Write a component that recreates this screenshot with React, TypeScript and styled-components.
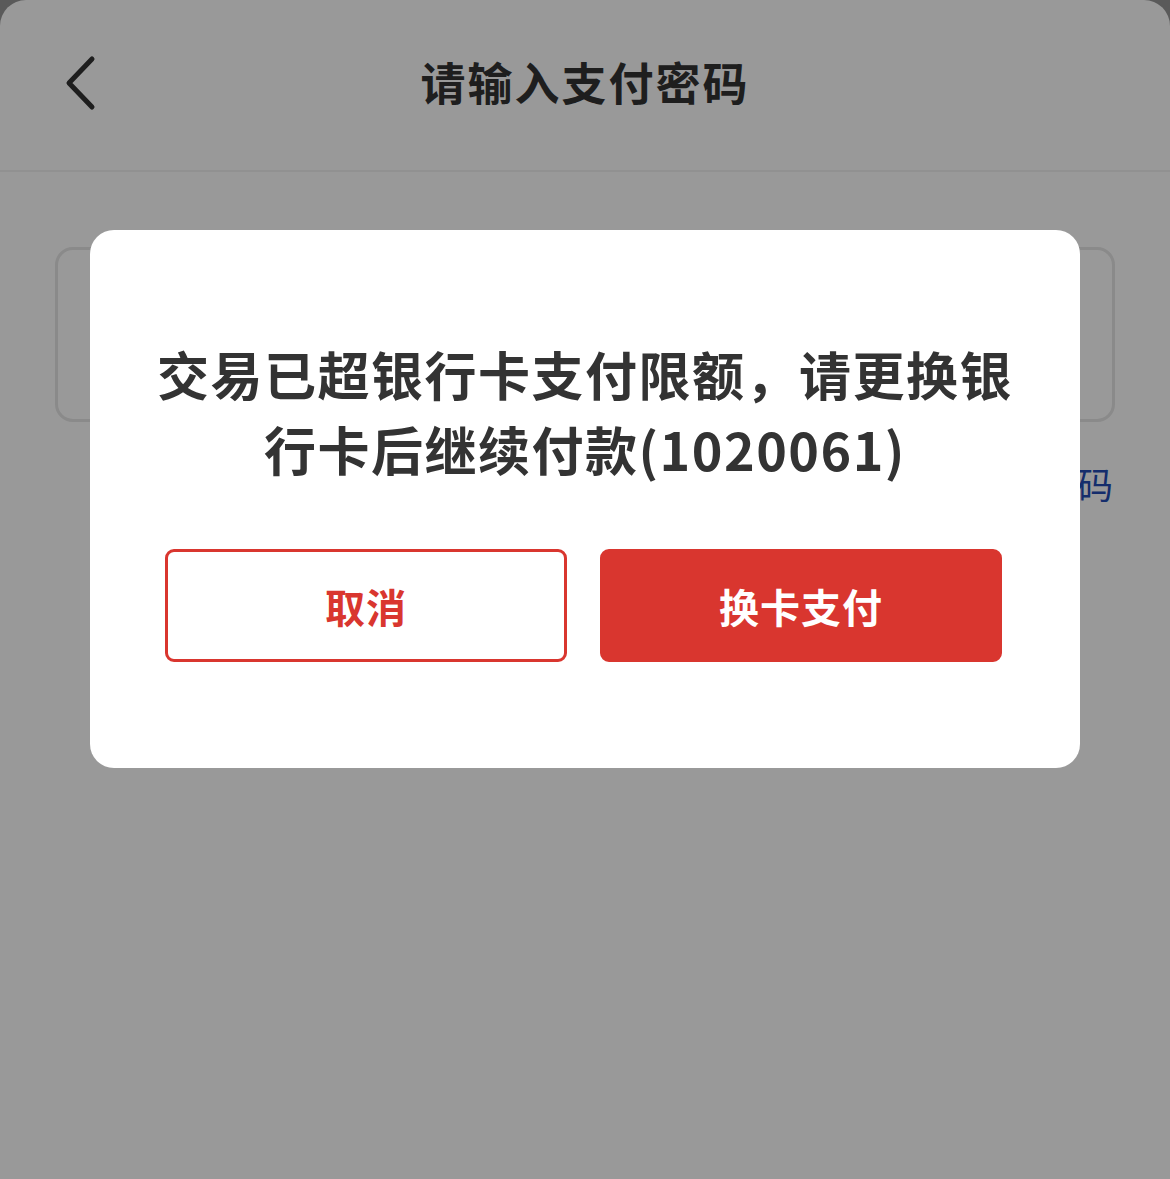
import React from 'react';
import styled, { createGlobalStyle } from 'styled-components';

const GlobalStyle = createGlobalStyle`
  html, body {
    margin: 0;
    padding: 0;
    background: #969696;
  }
  * {
    box-sizing: border-box;
  }
  #root {
    font-family: "Noto Sans CJK SC", "Noto Sans", sans-serif;
  }
`;

function BackIcon() {
  return (
    <svg width="40" height="60" viewBox="0 0 40 60" fill="none">
      <path
        d="M30 6 L7 30 L30 54"
        stroke="#333"
        strokeWidth="5"
        strokeLinecap="round"
        strokeLinejoin="round"
      />
    </svg>
  );
}

function App() {
  return (
    <>
      <GlobalStyle />
      <Page>
        <Header>
          <BackButton>
            <BackIcon />
          </BackButton>
          <Title>请输入支付密码</Title>
        </Header>
        <Body>
          <PasswordBox />
          <ForgotRow>
            <ForgotLink>忘记密码</ForgotLink>
          </ForgotRow>
        </Body>
      </Page>
      <Overlay>
        <Dialog>
          <Message>交易已超银行卡支付限额，请更换银行卡后继续付款(1020061)</Message>
          <ButtonRow>
            <DialogButton>取消</DialogButton>
            <DialogButton primary>换卡支付</DialogButton>
          </ButtonRow>
        </Dialog>
      </Overlay>
    </>
  );
}

const Page = styled.div`
  width: 100%;
  height: 1179px;
  background: #fff;
  border-radius: 26px 26px 0 0;
  overflow: hidden;
`;
const Header = styled.div`
  position: relative;
  height: 172px;
  display: flex;
  align-items: center;
  justify-content: center;
  border-bottom: 2px solid #f2f2f2;
  padding-bottom: 8px;
`;
const BackButton = styled.div`
  position: absolute;
  left: 62px;
  top: 53px;
  width: 40px;
  height: 60px;
`;
const Title = styled.div`
  font-size: 45px;
  font-weight: 700;
  color: #333;
  letter-spacing: 2px;
`;
const Body = styled.div`
  padding: 75px 55px 0;
`;
const PasswordBox = styled.div`
  height: 175px;
  border: 3px solid #e6e6e6;
  border-radius: 18px;
`;
const ForgotRow = styled.div`
  display: flex;
  justify-content: flex-end;
  padding-top: 36px;
  padding-right: 2px;
`;
const ForgotLink = styled.div`
  font-size: 36px;
  color: #234cb5;
  line-height: 50px;
`;
const Overlay = styled.div`
  position: fixed;
  inset: 0;
  background: rgba(0, 0, 0, 0.4);
  display: flex;
  justify-content: center;
  align-items: flex-start;
  padding-top: 230px;
`;
const Dialog = styled.div`
  width: 990px;
  background: #fff;
  border-radius: 24px;
  padding: 106px 62px 106px;
  display: flex;
  flex-direction: column;
  align-items: center;
`;
const Message = styled.div`
  font-size: 52px;
  line-height: 75px;
  font-weight: 700;
  color: #333;
  text-align: center;
  letter-spacing: 1.5px;
`;
const ButtonRow = styled.div`
  margin-top: 63px;
  display: flex;
  gap: 33px;
  margin-left: -3px;
`;
const DialogButton = styled.div<{ primary?: boolean }>`
  width: 402px;
  height: 113px;
  border-radius: 9px;
  border: 3px solid #d9362f;
  background: ${(p) => (p.primary ? '#d9362f' : '#fff')};
  color: ${(p) => (p.primary ? '#fff' : '#d9362f')};
  font-size: 40px;
  font-weight: 700;
  display: flex;
  align-items: center;
  justify-content: center;
  letter-spacing: 1px;
`;

export default App;
